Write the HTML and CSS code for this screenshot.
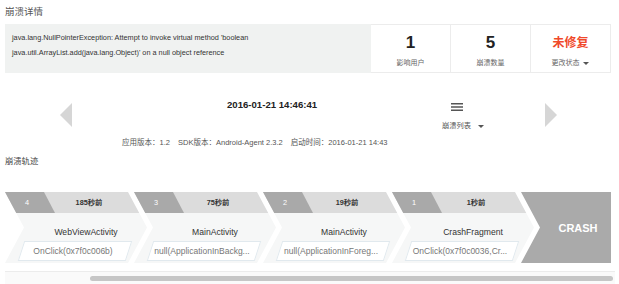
FILE: index.html
```html
<!DOCTYPE html>
<html lang="zh-CN">
<head>
<meta charset="UTF-8">
<meta name="viewport" content="width=device-width, initial-scale=1.0">
<title>崩溃详情</title>
<link rel="stylesheet" href="styles.css">
</head>
<body>
    <div class="page-title">崩溃详情</div>

    <div class="summary">
        <div class="summary-msg">
            java.lang.NullPointerException: Attempt to invoke virtual method 'boolean<br>
            java.util.ArrayList.add(java.lang.Object)' on a null object reference
        </div>
        <div class="stat">
            <div class="stat-value">1</div>
            <div class="stat-label">影响用户</div>
        </div>
        <div class="stat">
            <div class="stat-value">5</div>
            <div class="stat-label">崩溃数量</div>
        </div>
        <div class="stat">
            <div class="stat-value stat-red">未修复</div>
            <div class="stat-label">更改状态 <span class="caret"></span></div>
        </div>
    </div>

    <div class="nav">
        <div class="arrow arrow-prev"></div>
        <div class="nav-date">2016-01-21 14:46:41</div>
        <div class="nav-menu">
            <svg class="menu-icon" width="12" height="8" viewBox="0 0 12 8">
                <path d="M0 0.75H12M0 4H12M0 7.25H12" stroke="#555" stroke-width="1.3" fill="none"/>
            </svg>
            <div class="menu-label">崩溃列表 <span class="caret"></span></div>
        </div>
        <div class="arrow arrow-next"></div>
    </div>
    <div class="nav-meta">
        <span>应用版本：1.2</span>
        <span>SDK版本：Android-Agent 2.3.2</span>
        <span>启动时间：2016-01-21 14:43</span>
    </div>

    <div class="section-title">崩溃轨迹</div>

    <div class="trail">
        <div class="step">
            <div class="step-head"><div class="step-no">4</div><div class="step-time">185秒前</div></div>
            <div class="step-body">
                <div class="step-name">WebViewActivity</div>
                <div class="step-event"><span>OnClick(0x7f0c006b)</span></div>
            </div>
        </div>
        <div class="step">
            <div class="step-head"><div class="step-no">3</div><div class="step-time">75秒前</div></div>
            <div class="step-body">
                <div class="step-name">MainActivity</div>
                <div class="step-event"><span>null(ApplicationInBackg...</span></div>
            </div>
        </div>
        <div class="step">
            <div class="step-head"><div class="step-no">2</div><div class="step-time">19秒前</div></div>
            <div class="step-body">
                <div class="step-name">MainActivity</div>
                <div class="step-event"><span>null(ApplicationInForeg...</span></div>
            </div>
        </div>
        <div class="step">
            <div class="step-head"><div class="step-no">1</div><div class="step-time">1秒前</div></div>
            <div class="step-body">
                <div class="step-name">CrashFragment</div>
                <div class="step-event"><span>OnClick(0x7f0c0036,Cr...</span></div>
            </div>
        </div>
        <div class="crash">CRASH</div>
    </div>

    <div class="scroll"><div class="scroll-thumb"></div></div>
</body>
</html>
```

FILE: styles.css
```css
/* 基本字体 */
body {
    font-family: "Liberation Sans", "Noto Sans CJK SC", sans-serif;
    margin: 0;
    padding: 0 8px 0 5px;
    background: #fff;
    color: #333;
}
/* 标题 */
.page-title {
    font-size: 9.5px;
    line-height: 24px;
    color: #555;
}
/* 概要区域 */
.summary {
    display: flex;
    height: 49px;
    background: #f0f2f1;
}
.summary-msg {
    flex: 1;
    padding: 6px 7px;
    font-size: 7.3px;
    line-height: 15px;
    color: #333;
}
.stat {
    width: 80px;
    box-sizing: border-box;
    background: #fff;
    border: 1px solid #ececec;
    border-left: none;
    padding-top: 8px;
    text-align: center;
}
.stat:first-of-type {
    border-left: 1px solid #ececec;
}
.stat-value {
    font-size: 17px;
    font-weight: bold;
    line-height: 20px;
    color: #222;
}
.stat-red {
    font-size: 12px;
    color: #f04a2b;
}
.stat-label {
    margin-top: 4px;
    font-size: 7px;
    line-height: 12px;
    color: #666;
    white-space: nowrap;
}
/* 下拉小三角 */
.caret {
    display: inline-block;
    vertical-align: middle;
    margin-left: 2px;
    border-left: 3px solid transparent;
    border-right: 3px solid transparent;
    border-top: 3px solid #555;
}
/* 翻页导航 */
.nav {
    display: flex;
    align-items: flex-start;
    padding-top: 26px;
}
.arrow {
    flex: none;
    width: 0;
    height: 0;
    margin-top: 4px;
    border-top: 12.5px solid transparent;
    border-bottom: 12.5px solid transparent;
}
.arrow-prev {
    margin-left: 55px;
    border-right: 12px solid #d6d6d6;
}
.arrow-next {
    margin-left: 61px;
    border-left: 12px solid #d6d6d6;
}
.nav-date {
    flex: none;
    width: 368px;
    box-sizing: border-box;
    padding-left: 155px;
    font-size: 9.6px;
    font-weight: bold;
    line-height: 12px;
    color: #222;
}
.nav-menu {
    flex: none;
    width: 44px;
}
.menu-icon {
    display: block;
    margin: 4px 0 0 11px;
}
.menu-label {
    margin-top: 9px;
    padding-left: 2px;
    font-size: 7.25px;
    line-height: 12px;
    color: #555;
    white-space: nowrap;
}
.menu-label .caret {
    margin-left: 5px;
}
.nav-meta {
    margin-top: 5px;
    padding-left: 117px;
    font-size: 7.5px;
    line-height: 12px;
    color: #555;
}
.nav-meta span {
    margin-right: 6px;
}
.section-title {
    margin-top: 6px;
    font-size: 8.3px;
    line-height: 12px;
    color: #444;
}
/* 崩溃轨迹 */
.trail {
    display: flex;
    margin-top: 25px;
    height: 71px;
    overflow: hidden;
}
.step {
    flex: none;
    width: 142px;
    height: 71px;
    margin-right: -13px;
    clip-path: polygon(0 0, 123px 0, 142px 50%, 123px 100%, 0 100%, 19px 50%);
}
.step-head {
    display: flex;
    height: 21px;
    background: #dcdcdc;
    font-size: 7.3px;
    line-height: 21px;
}
.step-no {
    width: 50px;
    box-sizing: border-box;
    padding-right: 6px;
    text-align: center;
    color: #fff;
    background: #a9a9a9;
    clip-path: polygon(0 0, 39px 0, 100% 100%, 0 100%);
}
.step-time {
    flex: 1;
    padding-right: 24px;
    text-align: center;
    font-weight: bold;
    color: #333;
}
.step-body {
    height: 50px;
    background: #f6f7f7;
    padding-top: 13px;
    box-sizing: border-box;
}
.step-name {
    padding-left: 20px;
    text-align: center;
    font-size: 8.6px;
    line-height: 12px;
    color: #333;
}
.step-event {
    width: 108px;
    height: 20px;
    box-sizing: border-box;
    margin: 3px 0 0 16px;
    background: #fff;
    border: 1px solid #e1e9ee;
    transform: skewX(-18deg);
}
.step-event span {
    display: block;
    transform: skewX(18deg);
    padding: 0 6px 0 2px;
    text-align: center;
    font-size: 8.5px;
    line-height: 18px;
    color: #777;
    white-space: nowrap;
    overflow: hidden;
}
.crash {
    flex: none;
    width: 90px;
    height: 71px;
    box-sizing: border-box;
    padding-left: 24px;
    display: flex;
    align-items: center;
    justify-content: center;
    background: #aaa;
    color: #fff;
    font-size: 11px;
    font-weight: bold;
    clip-path: polygon(0 0, 100% 0, 100% 100%, 0 100%, 19px 50%);
}
/* 横向滚动条 */
.scroll {
    margin: 8px -4px 0 0;
    height: 13px;
    box-sizing: border-box;
    background: #fafafa;
    border-top: 1px solid #ececec;
    padding-top: 4px;
}
.scroll-thumb {
    height: 5px;
    margin: 0 2px 0 85px;
    border-radius: 3px;
    background: #c6c6c6;
}
```
